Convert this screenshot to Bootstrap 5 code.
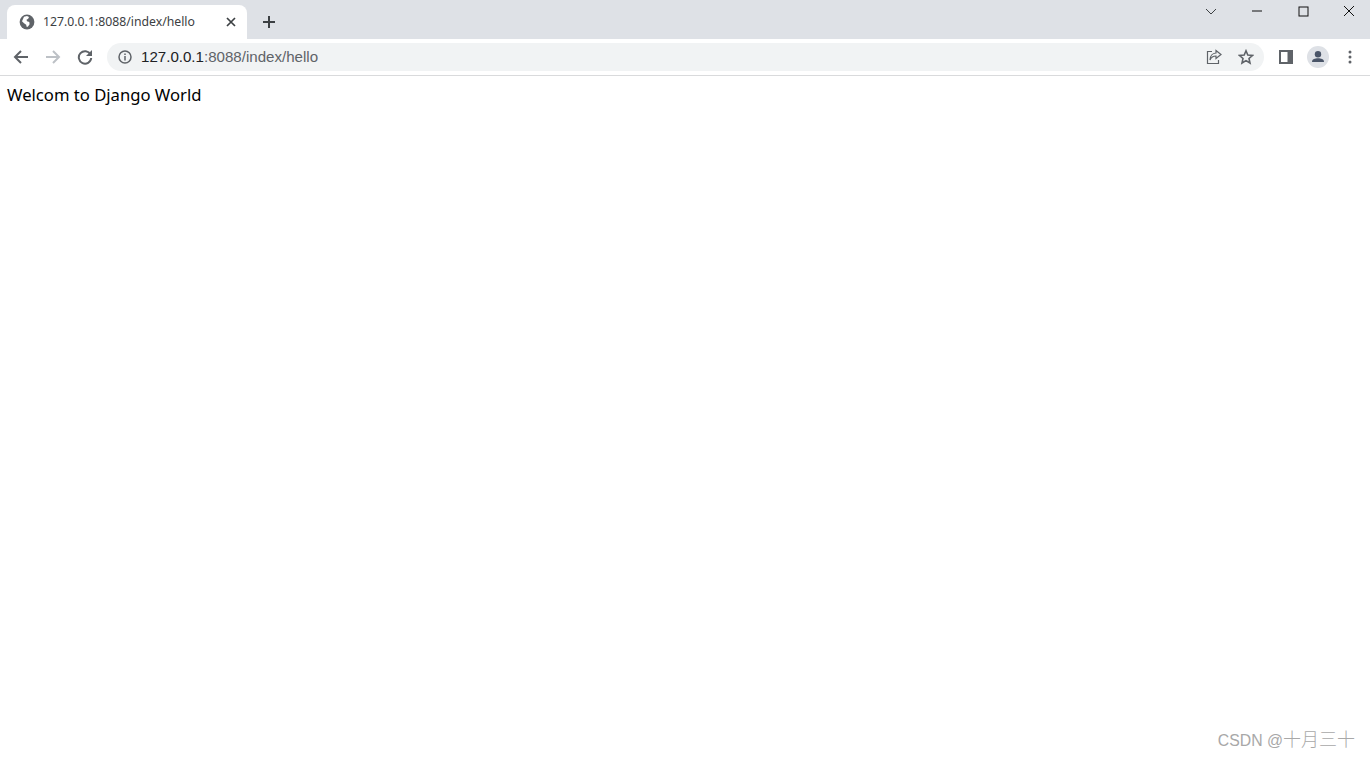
<!DOCTYPE html>
<html lang="en">
<head>
<meta charset="utf-8">
<title>127.0.0.1:8088/index/hello</title>
<link href="https://cdn.jsdelivr.net/npm/bootstrap@5.3.0/dist/css/bootstrap.min.css" rel="stylesheet">
<style>
html,body{height:100%;overflow:hidden}
body{background:#fff;font-family:"Noto Sans",Arial,sans-serif;position:relative}
.tabstrip{height:39px;background:#dee1e6}
.tabshape{width:240px;height:34px;margin-left:7px;margin-top:5px;background:#fff;border-radius:8px 8px 0 0;padding-left:12px;padding-right:11px;color:#3c4043}
.tabtext{margin-left:8px;white-space:nowrap;font-size:12.25px}
.newtab{margin-left:11px;margin-top:5px;width:22px;height:34px}
.winctl{margin-left:auto;margin-right:-2px;height:22px;align-self:flex-start}
.winbtn{width:46px;height:22px}
.toolrow{height:37px;background:#fff;border-bottom:1px solid #d9dadc;padding-left:5px}
.navbtn{width:32px;height:32px}
.omnibox{width:1157px;height:28px;margin-left:6px;background:#f1f3f4;border-radius:14px;padding-left:10px;padding-right:2px;font-family:"Liberation Sans",Arial,sans-serif;font-size:15.1px}
.urlhost{color:#202124;margin-left:8px}
.urlpath{color:#5f6368}
.omniright{margin-left:auto}
.omnibtn{width:32px;height:28px}
.rightgap{margin-left:6px}
.pagetext{font-size:16.65px;color:#000;margin:8px 0 0 7px;line-height:21px}
.watermark{position:absolute;right:15px;bottom:7px;font-size:15.8px;line-height:21px;color:#a8a8a8;font-family:"Liberation Sans",sans-serif}
.cjkmark{font-family:"Noto Sans CJK SC",sans-serif;font-size:18px;font-weight:300}
</style>
</head>
<body>
<div class="tabstrip d-flex">
  <div class="tabshape d-flex align-items-center">
    <svg width="16" height="16" viewBox="0 0 16 16"><circle cx="8" cy="8" r="7.4" fill="#5f6368"/><path d="M5 2.8 8 2 10 3 9.2 4.8 7.5 5.8 8 7.2 10.3 8 10.6 10.2 8.8 12.8 7.6 12.8 7.2 10.8 5 9.3 3 7.2Z" fill="#fff"/></svg>
    <span class="tabtext">127.0.0.1:8088/index/hello</span>
    <svg class="ms-auto" width="10" height="10" viewBox="0 0 10 10"><path d="M1 1 9 9M9 1 1 9" stroke="#3c4043" stroke-width="1.7"/></svg>
  </div>
  <div class="newtab d-flex align-items-center justify-content-center">
    <svg width="14" height="14" viewBox="0 0 14 14"><path d="M7 1V13M1 7H13" stroke="#3c4043" stroke-width="2"/></svg>
  </div>
  <div class="winctl d-flex">
    <div class="winbtn d-flex align-items-center justify-content-center"><svg width="12" height="7" viewBox="0 0 12 7"><path d="M1 1 6 6 11 1" fill="none" stroke="#3c4043" stroke-width="1"/></svg></div>
    <div class="winbtn d-flex align-items-center justify-content-center"><svg width="12" height="2" viewBox="0 0 12 2"><path d="M1 1H11" stroke="#111" stroke-width="1"/></svg></div>
    <div class="winbtn d-flex align-items-center justify-content-center"><svg width="11" height="11" viewBox="0 0 11 11"><rect x="1" y="1" width="9" height="9" fill="none" stroke="#111"/></svg></div>
    <div class="winbtn d-flex align-items-center justify-content-center"><svg width="12" height="12" viewBox="0 0 12 12"><path d="M1 1 11 11M11 1 1 11" stroke="#111" stroke-width="1"/></svg></div>
  </div>
</div>
<div class="toolrow d-flex align-items-center">
  <div class="navbtn d-flex align-items-center justify-content-center"><svg width="16" height="16" viewBox="0 0 16 16"><path d="M15 8H2M8 2 2 8 8 14" fill="none" stroke="#5f6368" stroke-width="2"/></svg></div>
  <div class="navbtn d-flex align-items-center justify-content-center"><svg width="16" height="16" viewBox="0 0 16 16"><path d="M1 8H14M8 2 14 8 8 14" fill="none" stroke="#bdc1c6" stroke-width="2"/></svg></div>
  <div class="navbtn d-flex align-items-center justify-content-center"><svg width="16" height="16" viewBox="0 0 16 16"><path d="M13.5 5.5A6.2 6.2 0 1 0 14.2 9" fill="none" stroke="#5f6368" stroke-width="2"/><path d="M15 1V7H9Z" fill="#5f6368"/></svg></div>
  <div class="omnibox d-flex align-items-center">
    <svg width="16" height="16" viewBox="0 0 16 16"><circle cx="8" cy="8" r="6" fill="none" stroke="#5f6368" stroke-width="1.5"/><path d="M8 7V11.5M8 4.5V6" stroke="#5f6368" stroke-width="1.5"/></svg>
    <span class="urlhost">127.0.0.1<span class="urlpath">:8088/index/hello</span></span>
    <div class="omniright d-flex">
      <div class="omnibtn d-flex align-items-center justify-content-center"><svg width="16" height="16" viewBox="0 0 16 16"><path d="M6 2.5H1.5V14.5H12.5V11" fill="none" stroke="#5f6368" stroke-width="1.2"/><path d="M10 1.5 15 5.5 10 9.5V7C7 7 5 8.5 4 11 4 7 6.5 4.2 10 4Z" fill="none" stroke="#5f6368" stroke-width="1.2"/></svg></div>
      <div class="omnibtn d-flex align-items-center justify-content-center"><svg width="16" height="16" viewBox="0 0 16 16"><path d="M8 1.8 9.8 6 14.5 6.4 11 9.5 12 14 8 11.6 4 14 5 9.5 1.5 6.4 6.2 6Z" fill="none" stroke="#5f6368" stroke-width="1.6"/></svg></div>
    </div>
  </div>
  <div class="navbtn rightgap d-flex align-items-center justify-content-center"><svg width="14" height="14" viewBox="0 0 14 14"><rect width="14" height="14" fill="#5f6368"/><rect x="2" y="2" width="6.5" height="10" fill="#fff"/></svg></div>
  <div class="navbtn d-flex align-items-center justify-content-center"><svg width="22" height="22" viewBox="0 0 22 22"><circle cx="11" cy="11" r="11" fill="#dee1e6"/><circle cx="11" cy="8.3" r="3.2" fill="#4a5568"/><path d="M5 16C5 13 8 12.3 11 12.3S17 13 17 16Z" fill="#4a5568"/></svg></div>
  <div class="navbtn d-flex align-items-center justify-content-center"><svg width="4" height="14" viewBox="0 0 4 14"><circle cx="2" cy="2" r="1.5" fill="#5f6368"/><circle cx="2" cy="7" r="1.5" fill="#5f6368"/><circle cx="2" cy="12" r="1.5" fill="#5f6368"/></svg></div>
</div>
<p class="pagetext">Welcom to Django World</p>
<div class="watermark">CSDN @<span class="cjkmark">十月三十</span></div>
<script src="https://cdn.jsdelivr.net/npm/bootstrap@5.3.0/dist/js/bootstrap.bundle.min.js"></script>
</body>
</html>
